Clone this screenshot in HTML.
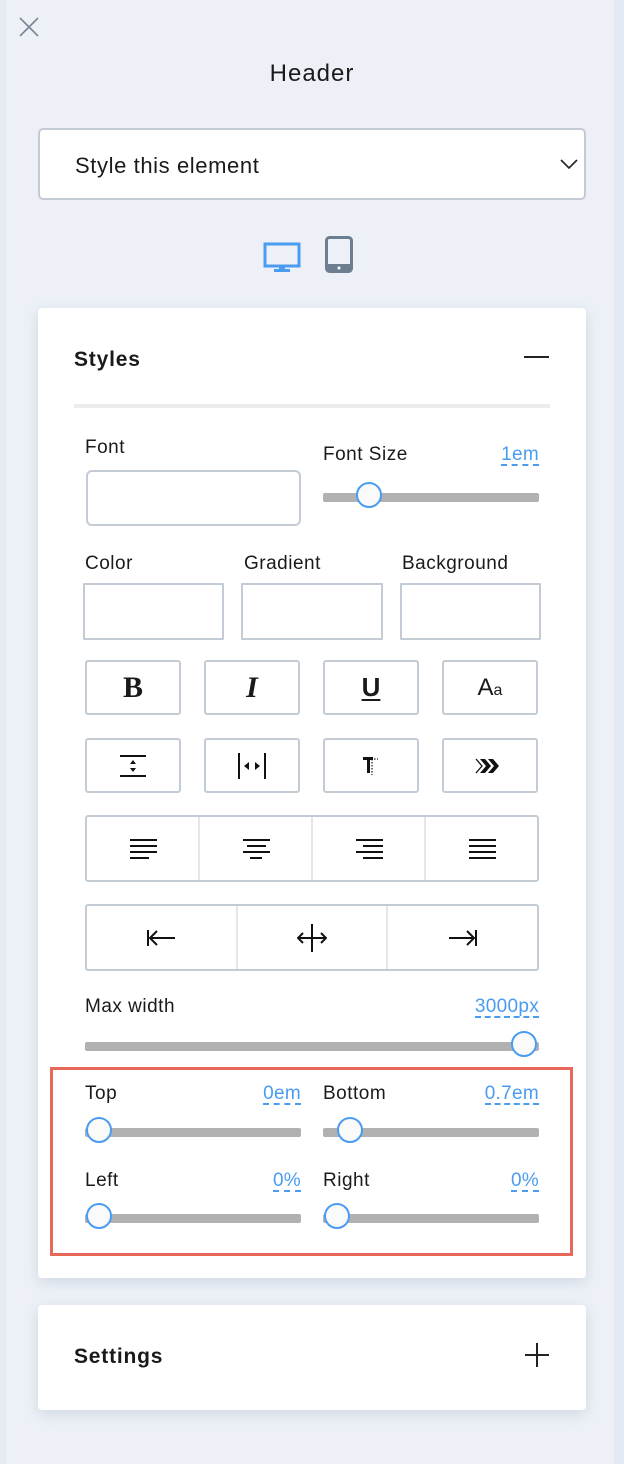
<!DOCTYPE html>
<html><head><meta charset="utf-8"><style>
*{box-sizing:border-box;margin:0;padding:0}
body{width:624px;height:1464px;background:#edf1f7;font-family:"Liberation Sans",sans-serif;color:#1a1a1a;position:relative;overflow:hidden}
.a{position:absolute}
.t{position:absolute;font-size:19px;letter-spacing:0.5px;line-height:1}
.v{position:absolute;font-size:19px;color:#4a9cf0;border-bottom:2px dashed #4a9cf0;line-height:1;letter-spacing:0.3px}
.tr{position:absolute;height:9px;background:#b1b1b1;border-radius:2px}
.th{position:absolute;width:26px;height:26px;border-radius:50%;border:2px solid #4a9cf0;background:#fafafa}
.box{position:absolute;border:2px solid #c3ccd5;background:#fff;border-radius:3px}
.btn{position:absolute;border:2px solid #c3ccd5;background:#fff;border-radius:3px;width:96px;height:55px;display:flex;align-items:center;justify-content:center}
.card{position:absolute;background:#fff;border-radius:4px;box-shadow:0 4px 14px rgba(120,140,170,.25)}
.grp{position:absolute;border:2px solid #c3ccd5;border-radius:3px;background:#fff;display:flex}
.grp>div{flex:1;display:flex;align-items:center;justify-content:center;border-left:2px solid #e6e6e6}
.grp>div:first-child{border-left:none}
</style></head><body>
<div class="a" style="left:0;top:0;width:6px;height:1464px;background:#e6ebf2"></div>
<div class="a" style="left:614px;top:0;width:10px;height:1464px;background:#e4eaf3"></div>
<svg class="a" style="left:18px;top:16px" width="22" height="22" viewBox="0 0 22 22"><path d="M2 2L20 20M20 2L2 20" stroke="#7a8796" stroke-width="1.6"/></svg>
<div class="a" style="left:0;width:624px;top:60px;text-align:center;font-size:24px;letter-spacing:1px">Header</div>
<div class="a" style="left:38px;top:128px;width:548px;height:72px;background:#fff;border:2px solid #c3ccd5;border-radius:5px"></div>
<div class="a" style="left:75px;top:153px;font-size:22px;letter-spacing:0.6px">Style this element</div>
<svg class="a" style="left:560px;top:158px" width="18" height="12" viewBox="0 0 18 12"><path d="M1 2L9 10L17 2" fill="none" stroke="#222" stroke-width="1.6"/></svg>
<svg class="a" style="left:263px;top:242px" width="38" height="32" viewBox="0 0 38 32"><rect x="2" y="2" width="34" height="22" fill="none" stroke="#4a9cf0" stroke-width="3"/><rect x="16" y="24" width="6" height="4" fill="#4a9cf0"/><rect x="11" y="27" width="16" height="3" fill="#4a9cf0"/></svg>
<svg class="a" style="left:325px;top:236px" width="28" height="37" viewBox="0 0 28 37"><rect x="1.5" y="1.5" width="25" height="34" rx="3" fill="none" stroke="#6e7e91" stroke-width="3"/><rect x="1.5" y="28" width="25" height="7.5" fill="#6e7e91"/><circle cx="14" cy="32" r="1.5" fill="#fff"/></svg>

<div class="card" style="left:38px;top:308px;width:548px;height:970px"></div>
<div class="a" style="left:74px;top:348px;font-size:21px;font-weight:bold;letter-spacing:0.8px">Styles</div>
<div class="a" style="left:524px;top:356px;width:25px;height:2px;background:#222"></div>
<div class="a" style="left:74px;top:404px;width:476px;height:4px;background:#ececec"></div>

<div class="t" style="left:85px;top:438px">Font</div>
<div class="box" style="left:86px;top:470px;width:215px;height:56px;border-radius:6px"></div>
<div class="t" style="left:323px;top:445px">Font Size</div>
<div class="v" style="right:85px;top:445px">1em</div>
<div class="tr" style="left:323px;top:493px;width:216px"></div>
<div class="th" style="left:356px;top:482px"></div>

<div class="t" style="left:85px;top:554px">Color</div>
<div class="t" style="left:244px;top:554px">Gradient</div>
<div class="t" style="left:402px;top:554px">Background</div>
<div class="box" style="left:83px;top:583px;width:141px;height:57px;border-radius:1px"></div>
<div class="box" style="left:241px;top:583px;width:142px;height:57px;border-radius:1px"></div>
<div class="box" style="left:400px;top:583px;width:141px;height:57px;border-radius:1px"></div>

<div class="btn" style="left:85px;top:660px"><span style="font-family:'Liberation Serif',serif;font-weight:bold;font-size:30px">B</span></div>
<div class="btn" style="left:204px;top:660px"><span style="font-family:'Liberation Serif',serif;font-weight:bold;font-style:italic;font-size:30px">I</span></div>
<div class="btn" style="left:323px;top:660px"><span style="font-family:'Liberation Sans',sans-serif;font-weight:bold;font-size:26px;text-decoration:underline;text-decoration-thickness:2px;text-underline-offset:3px">U</span></div>
<div class="btn" style="left:442px;top:660px"><span style="font-size:24px">A<span style="font-size:16px">a</span></span></div>

<div class="btn" style="left:85px;top:738px"><svg width="30" height="24" viewBox="0 0 30 24"><path d="M2 2H28M2 22H28" stroke="#111" stroke-width="2"/><path d="M15 6L12 10H18ZM15 18L12 14H18Z" fill="#111"/></svg></div>
<div class="btn" style="left:204px;top:738px"><svg width="30" height="28" viewBox="0 0 30 28"><path d="M2 1V27M28 1V27" stroke="#111" stroke-width="2"/><path d="M7 14L12 10V18ZM23 14L18 10V18Z" fill="#111"/></svg></div>
<div class="btn" style="left:323px;top:738px"><svg width="24" height="24" viewBox="0 0 24 24"><path d="M4 3H14V6H11V19H8V6H4Z" fill="#111"/><path d="M13 5V21M15 5H19" stroke="#111" stroke-width="1.2" stroke-dasharray="1.5 1.5"/></svg></div>
<div class="btn" style="left:442px;top:738px"><svg width="32" height="18" viewBox="0 0 32 18"><path d="M2 2L8 9L2 16" fill="none" stroke="#111" stroke-width="1.3"/><path d="M6 2H11L17 9L11 16H6L12 9ZM14 2H19L25 9L19 16H14L20 9Z" fill="#111"/></svg></div>

<div class="grp" style="left:85px;top:815px;width:454px;height:67px">
<div><svg width="28" height="22" viewBox="0 0 28 22"><path d="M1 2H28M1 8H28M1 14H28M1 20H20" stroke="#111" stroke-width="2"/></svg></div>
<div><svg width="28" height="22" viewBox="0 0 28 22"><path d="M1 2H28M5 8H24M1 14H28M8 20H20" stroke="#111" stroke-width="2"/></svg></div>
<div><svg width="28" height="22" viewBox="0 0 28 22"><path d="M1 2H28M8 8H28M1 14H28M8 20H28" stroke="#111" stroke-width="2"/></svg></div>
<div><svg width="28" height="22" viewBox="0 0 28 22"><path d="M1 2H28M1 8H28M1 14H28M1 20H28" stroke="#111" stroke-width="2"/></svg></div>
</div>
<div class="grp" style="left:85px;top:904px;width:454px;height:67px">
<div><svg width="30" height="20" viewBox="0 0 30 20"><path d="M2 2V18M4 10H29M11 3L4 10L11 17" fill="none" stroke="#111" stroke-width="2"/></svg></div>
<div><svg width="30" height="30" viewBox="0 0 30 30"><path d="M15 1V29M1 15H29M6 10L1 15L6 20M24 10L29 15L24 20" fill="none" stroke="#111" stroke-width="2"/></svg></div>
<div><svg width="30" height="20" viewBox="0 0 30 20"><path d="M28 2V18M1 10H26M19 3L26 10L19 17" fill="none" stroke="#111" stroke-width="2"/></svg></div>
</div>

<div class="t" style="left:85px;top:997px">Max width</div>
<div class="v" style="right:85px;top:997px">3000px</div>
<div class="tr" style="left:85px;top:1042px;width:454px"></div>
<div class="th" style="left:511px;top:1031px"></div>

<div class="a" style="left:50px;top:1067px;width:523px;height:189px;border:3px solid #e8685a"></div>
<div class="t" style="left:85px;top:1084px">Top</div>
<div class="v" style="right:323px;top:1084px">0em</div>
<div class="t" style="left:323px;top:1084px">Bottom</div>
<div class="v" style="right:85px;top:1084px">0.7em</div>
<div class="tr" style="left:85px;top:1128px;width:216px"></div>
<div class="th" style="left:86px;top:1117px"></div>
<div class="tr" style="left:323px;top:1128px;width:216px"></div>
<div class="th" style="left:337px;top:1117px"></div>
<div class="t" style="left:85px;top:1171px">Left</div>
<div class="v" style="right:323px;top:1171px">0%</div>
<div class="t" style="left:323px;top:1171px">Right</div>
<div class="v" style="right:85px;top:1171px">0%</div>
<div class="tr" style="left:85px;top:1214px;width:216px"></div>
<div class="th" style="left:86px;top:1203px"></div>
<div class="tr" style="left:323px;top:1214px;width:216px"></div>
<div class="th" style="left:324px;top:1203px"></div>

<div class="card" style="left:38px;top:1305px;width:548px;height:105px"></div>
<div class="a" style="left:74px;top:1345px;font-size:21px;font-weight:bold;letter-spacing:0.8px">Settings</div>
<svg class="a" style="left:524px;top:1342px" width="26" height="26" viewBox="0 0 26 26"><path d="M13 1V25M1 13H25" stroke="#222" stroke-width="2"/></svg>
</body></html>
